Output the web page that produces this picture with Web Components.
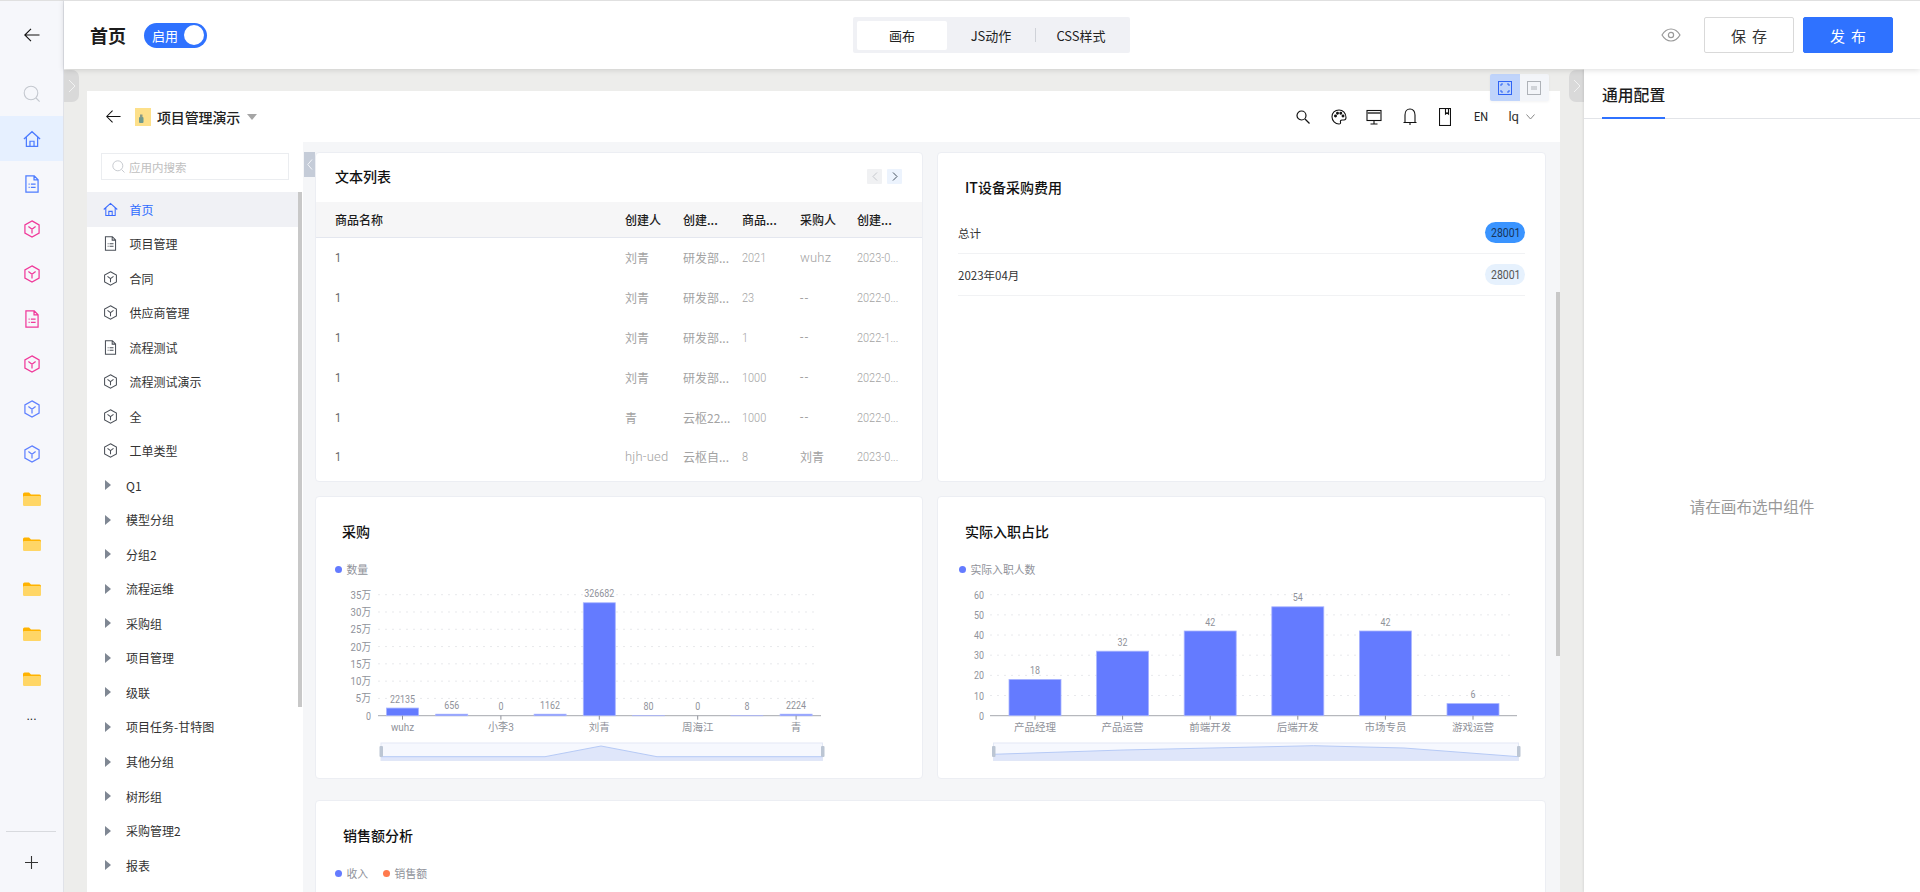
<!DOCTYPE html>
<html lang="zh">
<head>
<meta charset="utf-8">
<title>首页</title>
<style>
  html,body{margin:0;height:892px;overflow:hidden;background:#fff;}
  body{display:flex;font-family:"Noto Sans CJK SC",sans-serif;color:#222;}
</style>
</head>
<body>
<design-rail></design-rail>
<design-main>
  <design-topbar></design-topbar>
  <design-work>
    <design-stage>
      <app-preview>
        <app-nav slot="nav"></app-nav>
        <ui-card style="height:330px" heading="文本列表" pad="20" top="14" pager><data-table></data-table></ui-card>
        <ui-card style="height:330px" heading="IT设备采购费用" pad="28" top="25"><stat-list></stat-list></ui-card>
        <ui-card style="height:283px" heading="采购" pad="27" top="25">
          <chart-legend items="数量:#647bff"></chart-legend>
          <bar-chart kind="buy"></bar-chart>
        </ui-card>
        <ui-card style="height:283px" heading="实际入职占比" pad="28" top="25">
          <chart-legend items="实际入职人数:#647bff" left="21"></chart-legend>
          <bar-chart kind="staff"></bar-chart>
        </ui-card>
        <ui-card style="height:300px;grid-column:1 / 3;margin-top:7px" heading="销售额分析" pad="28" top="25">
          <chart-legend items="收入:#647bff,销售额:#ff7a4d"></chart-legend>
        </ui-card>
      </app-preview>
    </design-stage>
    <config-panel></config-panel>
  </design-work>
</design-main>

<script>
const LATIN = `Roboto,"Noto Sans CJK SC",sans-serif`;
// Los números del original van en una fuente estrecha, aquí los aprieto con scaleX
const COND = `display:inline-block;transform:scaleX(.84);transform-origin:0 50%;`;

const svg = (w, h, body, attrs = '') =>
  `<svg width="${w}" height="${h}" viewBox="0 0 16 16" fill="none" stroke-width="1.1" ${attrs}>${body}</svg>`;

const SHAPES = {
  home: '<path d="M.8 8 8 1.5 15.2 8M3 6.3V14.5H13V6.3M6.2 14.5V10H9.8V14.5"/>',
  doc: '<path d="M2.6.7H10L13.4 4.2V15.3H2.6ZM9.8.7V4.4H13.4M5 8.2H5.9M7 8.2H11.2M5 11H5.9M7 11H11.2"/>',
  cube: '<path d="M8 .8 14.3 4.4V11.6L8 15.2 1.7 11.6V4.4ZM4.8 5.8 8 8.2 11.2 5.8M8 8.2V12"/>'
};
const icon = (name, size, color) => svg(size, size, SHAPES[name], `stroke="${color}"`);

const folder = () => `<svg width="18" height="14" viewBox="0 0 18 14">
  <path d="M0 2A1.5 1.5 0 0 1 1.5.5H6L8 2.5H16.5A1.5 1.5 0 0 1 18 4V7H0Z" fill="#ffb300"/>
  <rect y="4" width="18" height="10" rx="1.2" fill="#ffd666"/></svg>`;

const arrowLeft = (w) => `<svg width="${w}" height="${w}" viewBox="0 0 16 16" fill="none" stroke="#111" stroke-width="1.1"><path d="M15.5 8H.8M7 1.8.8 8 7 14.2"/></svg>`;

// base: cada elemento solo dice su estilo y su plantilla
class ShadowEl extends HTMLElement {
  connectedCallback() {
    if (this.shadowRoot) return;
    this.attachShadow({mode:'open'}).innerHTML = `<style>${this.createStyle()}</style>` + this.createTemplate();
  }
  createStyle() { return ':host{display:block}'; }
  createTemplate() { return '<slot></slot>'; }
}

class DesignRail extends ShadowEl {
  createStyle() { return `
    :host{display:flex;flex-direction:column;flex:none;box-sizing:border-box;width:64px;height:892px;background:#f6f7fb;border-top:1px solid #e0e0e0;border-right:1px solid #e0e2e8;}
    .cell{height:45px;display:flex;align-items:center;justify-content:center;flex:none;}
    .back{height:67px;}
    .find{height:48px;padding-top:3px;box-sizing:border-box;}
    .on{background:#e6f0ff;}
    .more{height:31px;box-sizing:border-box;padding-top:8px;color:#222;font:12px "Liberation Sans",sans-serif;align-items:flex-start;line-height:14px;}
    .foot{margin-top:auto;height:60px;border-top:1px solid #d8dade;margin-left:6px;margin-right:7px;display:flex;align-items:center;justify-content:center;}
  `; }
  createTemplate() {
    const blue = '#4d7cff', pink = '#f0399a', cube = '#5f80ff';
    const rows = [
      icon('home',18,blue), icon('doc',18,blue), icon('cube',18,pink), icon('cube',18,pink),
      icon('doc',18,pink), icon('cube',18,pink), icon('cube',18,cube), icon('cube',18,cube),
      folder(), folder(), folder(), folder(), folder()
    ];
    return `
      <div class="cell back">${arrowLeft(16)}</div>
      <div class="cell find"><svg width="18" height="18" viewBox="0 0 18 18" fill="none" stroke="#c4c8cf" stroke-width="1.1"><circle cx="8" cy="8" r="6.8"/><path d="M13 13l3.6 3.6"/></svg></div>
      ${rows.map((r,i)=>`<div class="cell ${i==0?'on':''}">${r}</div>`).join('')}
      <div class="cell more">...</div>
      <div class="foot"><svg width="13" height="13" viewBox="0 0 13 13" stroke="#333" stroke-width="1.1"><path d="M6.5 0V13M0 6.5H13"/></svg></div>`;
  }
}

class DesignMain extends ShadowEl {
  createStyle() { return ':host{display:flex;flex-direction:column;flex:1;min-width:0;height:892px;}'; }
}

class DesignTopbar extends ShadowEl {
  createStyle() { return `
    :host{display:flex;align-items:center;flex:none;box-sizing:border-box;height:69px;background:#fff;border-top:1px solid #e0e0e0;position:relative;z-index:3;box-shadow:0 1px 6px rgba(0,0,0,.14);}
    h1{margin:0 0 0 26px;font-size:18px;font-weight:700;color:#1c1c1c;width:54px;}
    .toggle{display:flex;align-items:center;box-sizing:border-box;width:63px;height:25px;border-radius:13px;background:#2f72ff;color:#fff;font-size:13px;padding:0 3px 0 8px;justify-content:space-between;}
    .toggle i{width:20px;height:20px;border-radius:50%;background:#fff;}
    .seg{display:flex;align-items:center;box-sizing:border-box;margin-left:646px;width:277px;height:36px;background:#f0f1f5;border-radius:2px;padding:0 4px;font-size:13px;color:#222;}
    .seg span{text-align:center;}
    .seg .a{width:90px;height:29px;line-height:29px;background:#fff;border-radius:2px;}
    .seg .b{width:88px;}
    .seg .sep{width:1px;height:14px;background:#cfd2d8;}
    .seg .c{flex:1;}
    .eye{margin-left:auto;margin-right:23px;display:flex;}
    button{box-sizing:border-box;width:90px;height:36px;font:15px "Noto Sans CJK SC",sans-serif;letter-spacing:6px;text-indent:6px;border-radius:2px;padding:0;}
    .save{background:#fff;border:1px solid #d9d9d9;color:#333;margin-right:9px;}
    .pub{background:#2f72ff;border:1px solid #2f72ff;color:#fff;margin-right:27px;}
  `; }
  createTemplate() { return `
    <h1>首页</h1>
    <div class="toggle"><span>启用</span><i></i></div>
    <div class="seg"><span class="a">画布</span><span class="b">JS动作</span><span class="sep"></span><span class="c">CSS样式</span></div>
    <div class="eye"><svg width="20" height="14" viewBox="0 0 20 14" fill="none" stroke="#999" stroke-width="1.2"><path d="M1 7C3.5 2.8 6.5 1 10 1s6.5 1.8 9 6c-2.5 4.2-5.5 6-9 6S3.5 11.2 1 7Z"/><circle cx="10" cy="7" r="2.6"/></svg></div>
    <button class="save">保存</button><button class="pub">发布</button>`; }
}

class DesignWork extends ShadowEl {
  createStyle() { return ':host{display:flex;flex:1;min-height:0;}'; }
}

class DesignStage extends ShadowEl {
  createStyle() { return `
    :host{display:block;position:relative;flex:none;box-sizing:border-box;width:1520px;padding:22px 24px 0 23px;background:#ededeb;overflow:hidden;}
    .h{position:absolute;top:1px;width:15px;height:32px;background:#d9d9d9;display:flex;align-items:center;justify-content:center;}
    .l{left:0;border-radius:0 7px 7px 0;}
    .r{right:0;border-radius:7px 0 0 7px;}
    .tools{position:absolute;top:5px;right:35px;display:flex;height:27px;width:59px;border-radius:2px;overflow:hidden;background:#f3f5f9;box-shadow:0 1px 3px rgba(0,0,0,.05);}
    .tools div{flex:1;display:flex;align-items:center;justify-content:center;}
    .tools .on{background:#c0d4fb;}
  `; }
  createTemplate() {
    const ch = '<svg width="8" height="14" viewBox="0 0 8 14" fill="none" stroke="#f2f2f2" stroke-width="1"><path d="M1 1l6 6-6 6"/></svg>';
    return `
      <slot></slot>
      <div class="h l">${ch}</div><div class="h r">${ch}</div>
      <div class="tools">
        <div class="on"><svg width="14" height="14" viewBox="0 0 14 14" fill="none" stroke="#2f64f5"><rect x=".5" y=".5" width="13" height="13"/><path d="M3 5V3H5M9 3H11V5M11 9V11H9M5 11H3V9"/></svg></div>
        <div><svg width="14" height="14" viewBox="0 0 14 14" fill="none" stroke="#aeb2b8"><rect x=".5" y=".5" width="13" height="13"/><path d="M5 5V9M7 5V9M9 5V9"/></svg></div>
      </div>`;
  }
}

class AppPreview extends ShadowEl {
  createStyle() { return `
    :host{display:block;background:#fff;height:801px;overflow:hidden;}
    header{display:flex;align-items:center;height:51px;padding-right:25px;box-sizing:border-box;}
    .back{margin-left:19px;display:flex;width:29px;}
    .logo{display:flex;margin-right:6px;}
    .name{font-size:14px;font-weight:500;color:#222;letter-spacing:-.15px;}
    .caret{width:0;height:0;border:5px solid transparent;border-top:6px solid #a5a5a5;border-bottom:0;margin-left:7px;}
    .tools{margin-left:auto;display:flex;align-items:center;}
    .t{width:35.5px;display:flex;justify-content:center;color:#222;font:13px ${LATIN};}
    .t em{font-style:normal;${COND}margin-right:-3px;}
    .user{display:flex;align-items:center;margin-left:10px;font:13px ${LATIN};color:#333;gap:7px;}
    .body{display:flex;height:750px;}
    .main{position:relative;flex:1;min-width:0;background:#f5f6f8;padding:10px 14px 0 12px;display:grid;grid-template-columns:608px 609px;column-gap:14px;row-gap:14px;align-content:start;}
    .fold{position:absolute;left:1px;top:10px;width:11px;height:25px;background:#c5ccd8;display:flex;align-items:center;justify-content:center;}
    .bar{position:absolute;right:0;top:150px;width:4px;height:364px;background:#c8c8c8;}
  `; }
  createTemplate() { return `
    <header>
      <span class="back">${arrowLeft(15)}</span>
      <span class="logo"><svg width="16" height="18" viewBox="0 0 16 18"><rect width="16" height="18" fill="#fde08a"/><rect x="4" y="9" width="4.5" height="6" rx="1" fill="#6f9a8e"/><rect x="5" y="6.5" width="2.5" height="3" fill="#8a9a86"/></svg></span>
      <span class="name">项目管理演示</span><span class="caret"></span>
      <span class="tools">
        <span class="t"><svg width="14" height="14" viewBox="0 0 14 14" fill="none" stroke="#111" stroke-width="1.2"><circle cx="5.5" cy="5.5" r="4.5"/><path d="M9 9l4.5 4.5"/></svg></span>
        <span class="t"><svg width="16" height="16" viewBox="0 0 16 16" fill="none" stroke="#111" stroke-width="1.1"><path d="M8 1C3.8 1 1 4 1 7.8 1 11.8 4.2 15 8 15c1.3 0 1.8-.8 1.5-1.8-.4-1.3.2-2.2 1.5-2.2h2c1.3 0 2-1 2-2.5C15 4 12 1 8 1Z"/><circle cx="4.5" cy="7" r=".9" fill="#111"/><circle cx="6.5" cy="4.3" r=".9" fill="#111"/><circle cx="9.8" cy="4.3" r=".9" fill="#111"/><circle cx="12" cy="7" r=".9" fill="#111"/></svg></span>
        <span class="t"><svg width="16" height="16" viewBox="0 0 16 16" fill="none" stroke="#111" stroke-width="1.1"><rect x="1" y="1.5" width="14" height="10"/><path d="M1 4H15" stroke="#666" stroke-width="2"/><path d="M8 11.5V15M4.5 15H11.5"/></svg></span>
        <span class="t"><svg width="14" height="18" viewBox="0 0 14 18" fill="none" stroke="#111" stroke-width="1.1"><path d="M2 14.5V7C2 3.5 4 1 7 1s5 2.5 5 6v7.5ZM.5 14.5H13.5M7 14.5V17"/></svg></span>
        <span class="t"><svg width="12" height="18" viewBox="0 0 12 18" fill="none" stroke="#111" stroke-width="1.1"><rect x=".5" y=".5" width="11" height="17"/><path d="M6.5 .5V6L8 4.8 9.5 6V.5"/></svg></span>
        <span class="t"><em>EN</em></span>
        <span class="user"><span>lq</span><svg width="9" height="6" viewBox="0 0 9 6" fill="none" stroke="#888"><path d="M.5.5 4.5 5 8.5.5"/></svg></span>
      </span>
    </header>
    <div class="body">
      <slot name="nav"></slot>
      <div class="main">
        <slot></slot>
        <div class="fold"><svg width="6" height="11" viewBox="0 0 6 11" fill="none" stroke="#f2f4f8"><path d="M5 .5.8 5.5 5 10.5"/></svg></div>
        <div class="bar"></div>
      </div>
    </div>`; }
}

const NAV_ITEMS = [
  ['home','首页'],['doc','项目管理'],['cube','合同'],['cube','供应商管理'],['doc','流程测试'],
  ['cube','流程测试演示'],['cube','全'],['cube','工单类型']
];
const NAV_GROUPS = ['Q1','模型分组','分组2','流程运维','采购组','项目管理','级联','项目任务-甘特图','其他分组','树形组','采购管理2','报表'];

class AppNav extends ShadowEl {
  createStyle() { return `
    :host{display:block;position:relative;flex:none;width:216px;height:750px;background:#fff;overflow:hidden;font-size:12px;color:#333;}
    .find{display:flex;align-items:center;gap:4px;box-sizing:border-box;margin:11px 0 12px 14px;width:188px;height:27px;border:1px solid #ebedf0;padding-left:10px;color:#c0c0c0;font-size:11.5px;}
    ul{list-style:none;margin:0;padding:0;width:211px;}
    li{display:flex;align-items:center;height:34.52px;padding-left:15.5px;box-sizing:border-box;}
    li svg{flex:none;margin-right:12px;}
    li.on{background:#f0f1f5;color:#2f6bff;}
    li.g{padding-left:18px;}
    li.g i{width:0;height:0;border:5px solid transparent;border-left:6px solid #7f8793;border-right:0;margin-right:15px;}
    .bar{position:absolute;right:1px;top:50px;width:4px;height:515px;background:#c8c8c8;}
  `; }
  createTemplate() {
    const items = NAV_ITEMS.map(([ic,t],i)=>`<li class="${i==0?'on':''}">${icon(ic,15,i==0?'#3a6bff':'#4a4f57')}<span>${t}</span></li>`).join('');
    const groups = NAV_GROUPS.map(t=>`<li class="g"><i></i><span>${t}</span></li>`).join('');
    return `
      <div class="find"><svg width="13" height="13" viewBox="0 0 13 13" fill="none" stroke="#c8cbd0"><circle cx="5.8" cy="5.8" r="5"/><path d="M9.5 9.5l3 3"/></svg>应用内搜索</div>
      <ul>${items}${groups}</ul>
      <div class="bar"></div>`;
  }
}

class UiCard extends ShadowEl {
  createStyle() {
    const pad = this.getAttribute('pad'), top = this.getAttribute('top');
    return `
    :host{display:block;box-sizing:border-box;background:#fff;border:1px solid #eceef3;border-radius:4px;overflow:hidden;}
    .head{display:flex;align-items:center;height:20px;margin:${top-1}px 0 0 ${pad-1}px;font-size:14px;font-weight:500;color:#111;}
    .pager{display:flex;gap:5px;margin-left:auto;margin-right:20px;}
    .pager span{width:15px;height:15px;display:flex;align-items:center;justify-content:center;border-radius:1px;}
    .p{background:#f0f1f3;}
    .n{background:#ecf3fd;}
  `; }
  createTemplate() {
    const pager = this.hasAttribute('pager') ? `<div class="pager">
      <span class="p"><svg width="6" height="9" viewBox="0 0 6 9" fill="none" stroke="#c4c7cc"><path d="M5 .5 1 4.5 5 8.5"/></svg></span>
      <span class="n"><svg width="6" height="9" viewBox="0 0 6 9" fill="none" stroke="#45505f"><path d="M1 .5 5 4.5 1 8.5"/></svg></span></div>` : '';
    return `<div class="head"><span>${this.getAttribute('heading')}</span>${pager}</div><slot></slot>`;
  }
}

const TABLE_HEAD = ['商品名称','创建人','创建...','商品...','采购人','创建...'];
const TABLE_ROWS = [
  ['1','刘青','研发部...','2021','wuhz','2023-0...'],
  ['1','刘青','研发部...','23','--','2022-0...'],
  ['1','刘青','研发部...','1','--','2022-1...'],
  ['1','刘青','研发部...','1000','--','2022-0...'],
  ['1','青','云枢22...','1000','--','2022-0...'],
  ['1','hjh-ued','云枢自...','8','刘青','2023-0...']
];

class DataTable extends ShadowEl {
  createStyle() { return `
    :host{display:block;margin-top:16px;}
    .r{display:grid;grid-template-columns:290px 58px 59px 58px 57px 1fr;padding-left:19px;align-items:center;}
    .h{height:36px;box-sizing:border-box;background:#f6f6f7;border-bottom:1px solid #e4e7ef;font-size:12px;font-weight:500;color:#1c1c1c;}
    .b{height:39.8px;font-size:12px;color:#a3a3a3;}
    .b span{white-space:nowrap;}
    .b .n{font:300 13px ${LATIN};${COND}}
    .b .w{font:300 13px ${LATIN};letter-spacing:.2px;}
    .b .d{font:400 12px ${LATIN};letter-spacing:1.5px;}
    .b span:nth-child(1){color:#666;font-weight:400;}
  `; }
  createTemplate() {
    const kind = (c) => c == '--' ? 'd' : /^[a-z-]+$/.test(c) ? 'w' : /^[\x00-\x7f]+$/.test(c) ? 'n' : '';
    const head = TABLE_HEAD.map(c=>`<span>${c}</span>`).join('');
    const row = (r) => r.map(c=>`<span class="${kind(c)}">${c}</span>`).join('');
    return `<div class="r h">${head}</div>` + TABLE_ROWS.map(r=>`<div class="r b">${row(r)}</div>`).join('');
  }
}

class StatList extends ShadowEl {
  createStyle() { return `
    :host{display:block;margin:15px 20px 0 20px;font-size:11.5px;color:#333;}
    .row{display:flex;align-items:center;justify-content:space-between;height:41px;border-bottom:1px solid #f1f2f4;}
    b{box-sizing:border-box;width:40px;height:21px;border-radius:11px;text-align:left;padding-left:6px;font:400 12.5px/21px ${LATIN};}
    b span{${COND}}
    .top b{background:#3a94ff;color:#17345c;}
    .sub b{background:#e6f1fd;color:#555;}
  `; }
  createTemplate() { return `
    <div class="row top"><span>总计</span><b><span>28001</span></b></div>
    <div class="row sub"><span>2023年04月</span><b><span>28001</span></b></div>`; }
}

class ChartLegend extends ShadowEl {
  createStyle() { return `
    :host{display:flex;height:14px;margin:21px 0 0 ${(this.getAttribute('left')||19)}px;gap:15px;font-size:10.8px;color:#8f929a;align-items:center;}
    span{display:flex;align-items:center;gap:4.5px;}
    i{width:7px;height:7px;border-radius:50%;}
  `; }
  createTemplate() {
    return this.getAttribute('items').split(',').map(it=>{
      const [t,c] = it.split(':');
      return `<span><i style="background:${c}"></i>${t}</span>`;
    }).join('');
  }
}

const CHARTS = {
  buy: {
    x0:63, x1:506, gridEnd:502, labelX:56, first:87.5, slot:49.2, barW:32, max:350000,
    ticks:['0','5万','10万','15万','20万','25万','30万','35万'],
    cats:['wuhz','','小李3','','刘青','','周海江','','青'],
    vals:[22135,656,0,1162,326682,80,0,8,2224],
    sx:66, sw:441.5,
    area:[[66,172.7],[230,172.7],[286,162],[342,172.7],[507.5,172.7]]
  },
  staff: {
    x0:53, x1:580, gridEnd:578, labelX:47, first:98, slot:87.6, barW:52, max:60,
    ticks:['0','10','20','30','40','50','60'],
    cats:['产品经理','产品运营','前端开发','后端开发','市场专员','游戏运营'],
    vals:[18,32,42,54,42,6],
    sx:56.5, sw:525,
    area:[[56.5,170.3],[186,166],[376.7,161.7],[467,164],[581.5,172.7]]
  }
};

// ancho que tendría la fuente estrecha del original; solo para textos con números o latinas
const squeeze = (s) => {
  if (/^[\u4e00-\u9fff]+$/.test(s)) return '';
  let w = 0;
  for (const ch of s) w += /[0-9]/.test(ch) ? 5 : /[a-z]/.test(ch) ? 5.8 : 10.4;
  return `textLength="${w}" lengthAdjust="spacingAndGlyphs"`;
};

class BarChart extends ShadowEl {
  createStyle() { return `
    :host{display:block;margin-top:8px;}
    svg{display:block;}
    text{font:11.5px ${LATIN};fill:#8f929a;}
    .cjk{font-size:10.5px;}
  `; }
  createTemplate() {
    const c = CHARTS[this.getAttribute('kind')];
    const yb = 131.7, yt = 10.7, plot = yb - yt, stepY = plot / (c.ticks.length - 1);
    const label = (x, y, anchor, s) => {
      const sq = squeeze(String(s));
      return `<text class="${sq?'':'cjk'}" x="${x}" y="${y}" text-anchor="${anchor}" dominant-baseline="central" ${sq}>${s}</text>`;
    };
    let out = '';
    c.ticks.forEach((t,i)=>{
      const y = yb - i * stepY;
      if (i) out += `<line x1="${c.x0}" x2="${c.gridEnd}" y1="${y}" y2="${y}" stroke="#e8e9ec" stroke-dasharray="2 5"/>`;
      out += label(c.labelX, y, 'end', t);
    });
    out += `<line x1="${c.x0}" x2="${c.x1}" y1="${yb}" y2="${yb}" stroke="#a6a8ae"/>`;
    c.vals.forEach((v,i)=>{
      const cx = c.first + i * c.slot;
      let h = v / c.max * plot;
      if (v > 100 && h < 1.5) h = 1.5;
      if (h) out += `<rect x="${cx-c.barW/2}" y="${yb-h}" width="${c.barW}" height="${h}" fill="#647bff" stroke="#a9b5ff" stroke-width=".8"/>`;
      out += label(cx, yb-h-9.5, 'middle', v);
      if (c.cats[i]) {
        out += `<line x1="${cx}" x2="${cx}" y1="${yb}" y2="${yb+4}" stroke="#8f929a"/>`;
        out += label(cx, 143, 'middle', c.cats[i]);
      }
    });
    // slider de abajo
    const top = c.area.map(p=>p.join(',')).join(' ');
    const sx = c.sx, ex = sx + c.sw;
    out += `<rect x="${sx}" y="159" width="${c.sw}" height="17.5" fill="#f6f8fe" stroke="#e3e8f5"/>`;
    out += `<polygon points="${top} ${ex},176.5 ${sx},176.5" fill="#dfe6fa"/>`;
    out += `<polyline points="${top}" fill="none" stroke="#b6caf6"/>`;
    out += `<rect x="${sx-1.5}" y="162" width="3.5" height="11" rx="1" fill="#bcc6d4"/><rect x="${ex-1.5}" y="162" width="3.5" height="11" rx="1" fill="#bcc6d4"/>`;
    return `<svg width="606" height="180" viewBox="1 0 606 180">${out}</svg>`;
  }
}

class ConfigPanel extends ShadowEl {
  createStyle() { return `
    :host{display:flex;flex-direction:column;flex:1;min-width:0;background:#fff;position:relative;box-shadow:-1px 0 2px rgba(0,0,0,.08);}
    .tabs{height:50px;box-sizing:border-box;border-bottom:1px solid #e2e4e8;padding-left:18px;display:flex;flex:none;}
    .tabs span{height:50px;line-height:52px;box-sizing:border-box;border-bottom:2px solid #2f72ff;font-size:15.8px;font-weight:500;color:#1c1c1c;}
    .empty{flex:1;display:flex;align-items:center;justify-content:center;font-size:15.6px;color:#999;}
  `; }
  createTemplate() { return `<div class="tabs"><span>通用配置</span></div><div class="empty">请在画布选中组件</div>`; }
}

customElements.define('design-rail', DesignRail);
customElements.define('design-main', DesignMain);
customElements.define('design-topbar', DesignTopbar);
customElements.define('design-work', DesignWork);
customElements.define('design-stage', DesignStage);
customElements.define('app-preview', AppPreview);
customElements.define('app-nav', AppNav);
customElements.define('ui-card', UiCard);
customElements.define('data-table', DataTable);
customElements.define('stat-list', StatList);
customElements.define('chart-legend', ChartLegend);
customElements.define('bar-chart', BarChart);
customElements.define('config-panel', ConfigPanel);
</script>
</body>
</html>
